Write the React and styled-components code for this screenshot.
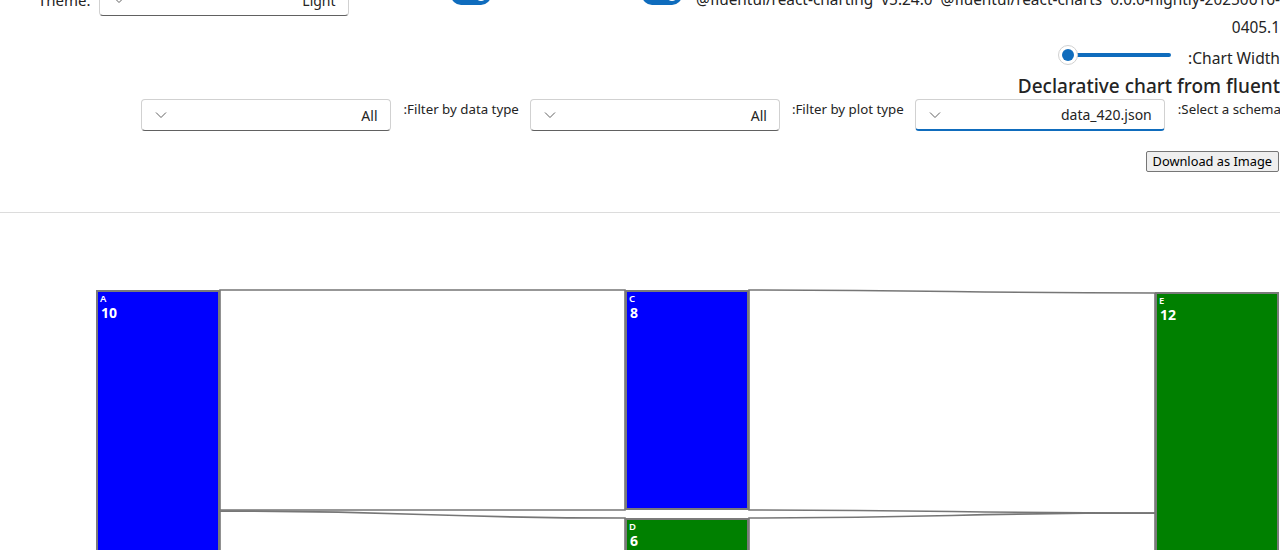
import styled, { createGlobalStyle } from 'styled-components'

const GlobalStyle = createGlobalStyle`
  html, body {
    margin: 0;
    padding: 0;
    background: #ffffff;
  }
  body {
    font-family: 'Segoe UI', 'Noto Sans', 'Open Sans', sans-serif;
    color: #242424;
    overflow: hidden;
  }
`

const Page = styled.div`
  width: 1280px;
  height: 550px;
  overflow: hidden;
`

const Content = styled.div`
  margin-top: -16px;
`

const TopRow = styled.div`
  display: flex;
  align-items: flex-start;
  height: 58px;
`

const ThemeLabel = styled.span`
  margin-left: 38px;
  font-size: 15px;
  line-height: 32px;
`

const Toggle = styled.div`
  width: 40px;
  height: 20px;
  border-radius: 10px;
  background-color: #0f6cbd;
  margin-left: ${(props) => props.offset}px;
  margin-top: 1px;
  display: flex;
  align-items: center;
  justify-content: flex-end;
  padding-right: 4px;
  box-sizing: border-box;
  span {
    width: 12px;
    height: 12px;
    border-radius: 50%;
    background: #ffffff;
  }
`

const Version = styled.div`
  flex: 1;
  margin-left: 14px;
  margin-top: 2px;
  font-size: 15.4px;
  line-height: 28px;
  text-align: right;
  white-space: nowrap;
`

const SliderRow = styled.div`
  display: flex;
  justify-content: flex-end;
  align-items: center;
  height: 26px;
`

const Slider = styled.div`
  position: relative;
  width: 115px;
  height: 20px;
  display: flex;
  align-items: center;
  &::before {
    content: '';
    display: block;
    margin-left: 10px;
    width: 103px;
    height: 4px;
    border-radius: 2px;
    background: #0f6cbd;
  }
`

const Thumb = styled.span`
  position: absolute;
  left: 0;
  top: 0;
  width: 20px;
  height: 20px;
  border-radius: 50%;
  background: #ffffff;
  border: 1px solid #d1d1d1;
  box-sizing: border-box;
  display: flex;
  align-items: center;
  justify-content: center;
  &::after {
    content: '';
    width: 12px;
    height: 12px;
    border-radius: 50%;
    background: #0f6cbd;
  }
`

const RowLabel = styled.span`
  font-size: 15.6px;
  line-height: 20px;
  padding-top: 6px;
  margin-left: 15px;
  white-space: nowrap;
`

const Title = styled.h2`
  margin: 4px 0 0;
  font-size: 19px;
  font-weight: 500;
  line-height: 28px;
  text-align: right;
  white-space: nowrap;
`

const FilterRow = styled.div`
  display: flex;
  justify-content: flex-end;
  align-items: flex-start;
  margin-top: -1px;
  margin-right: -12px;
`

const FilterLabel = styled.span`
  font-size: 13.3px;
  line-height: 20px;
  margin-left: ${(props) => props.gap || 12}px;
  margin-right: 11px;
  white-space: nowrap;
`

const DropBox = styled.div`
  flex: none;
  width: 250px;
  height: 32px;
  box-sizing: border-box;
  border: 1px solid #d1d1d1;
  border-bottom: ${(props) => (props.focused ? '2px solid #0f6cbd' : '1px solid #616161')};
  border-radius: 4px;
  background: #ffffff;
  display: flex;
  align-items: center;
  justify-content: space-between;
  padding: 0 12px 0 13px;
  font-size: 14px;
  color: #242424;
  margin-left: ${(props) => props.offset || 0}px;
  svg {
    display: block;
  }
`

const DownloadRow = styled.div`
  display: flex;
  justify-content: flex-end;
  margin-top: 20px;
  padding-right: 1px;
`

const DownloadButton = styled.button`
  height: 21px;
  padding: 0 6px;
  font-family: inherit;
  font-size: 12.8px;
  line-height: 17px;
  color: #000000;
  background: #efefef;
  border: 1px solid #767676;
  border-radius: 2px;
`

const Divider = styled.div`
  margin-top: 40px;
  height: 1px;
  background: #dcdcdc;
`

const Chart = styled.svg`
  display: block;
  font-family: 'Segoe UI', 'Noto Sans', 'Open Sans', sans-serif;
`

const Chevron = () => (
  <svg width="12" height="8" viewBox="0 0 12 8">
    <polyline points="1,1.5 6,6.5 11,1.5" fill="none" stroke="#616161" strokeWidth="1" />
  </svg>
)

function Dropdown({ value, focused, offset }) {
  return (
    <DropBox focused={focused} offset={offset}>
      <Chevron />
      <span>{value}</span>
    </DropBox>
  )
}

const nodes = [
  { id: 'A', value: 10, x: 97, y: 77, h: 400, color: '#0000ff' },
  { id: 'C', value: 8, x: 626, y: 77, h: 218, color: '#0000ff' },
  { id: 'D', value: 6, x: 626, y: 305, h: 100, color: '#008000' },
  { id: 'E', value: 12, x: 1156, y: 79, h: 400, color: '#008000' },
]

const links = [
  { x0: 220, x1: 625, t0: 76, t1: 76, b0: 296, b1: 296 },
  { x0: 220, x1: 625, t0: 297, t1: 304, b0: 420, b1: 420 },
  { x0: 749, x1: 1155, t0: 76, t1: 79, b0: 296, b1: 299 },
  { x0: 749, x1: 1155, t0: 304, t1: 299, b0: 420, b1: 420 },
]

const linkPath = ({ x0, x1, t0, t1, b0, b1 }) => {
  const xm = (x0 + x1) / 2
  return `M${x0},${t0} C${xm},${t0} ${xm},${t1} ${x1},${t1} L${x1},${b1} C${xm},${b1} ${xm},${b0} ${x0},${b0} Z`
}

function Sankey() {
  return (
    <Chart width="1280" height="338" viewBox="0 -1 1280 338">
      {links.map((l, i) => (
        <path key={i} d={linkPath(l)} fill="#ffffff" stroke="#767676" strokeWidth="1.6" />
      ))}
      {nodes.map((n) => (
        <g key={n.id}>
          <rect x={n.x} y={n.y} width="122" height={n.h} fill={n.color} stroke="#7a7a7a" strokeWidth="2" />
          <text x={n.x + 3} y={n.y + 11} fill="#ffffff" fontSize="9.5" fontWeight="600">
            {n.id}
          </text>
          <text x={n.x + 4} y={n.y + 27} fill="#ffffff" fontSize="14" fontWeight="700">
            {n.value}
          </text>
        </g>
      ))}
    </Chart>
  )
}

export default function App() {
  return (
    <Page>
      <GlobalStyle />
      <Content>
        <TopRow>
          <ThemeLabel>Theme:</ThemeLabel>
          <Dropdown value="Light" offset={8} />
          <Toggle offset={102}>
            <span />
          </Toggle>
          <Toggle offset={151}>
            <span />
          </Toggle>
          <Version>
            @fluentui/react-charting&nbsp; v5.24.0&nbsp; @fluentui/react-charts&nbsp; 0.0.0-nightly-20250616-
            <br />
            0405.1
          </Version>
        </TopRow>
        <SliderRow>
          <Slider>
            <Thumb />
          </Slider>
          <RowLabel>:Chart Width</RowLabel>
        </SliderRow>
        <Title>Declarative chart from fluent</Title>
        <FilterRow>
          <Dropdown value="All" />
          <FilterLabel gap={13}>:Filter by data type</FilterLabel>
          <Dropdown value="All" />
          <FilterLabel>:Filter by plot type</FilterLabel>
          <Dropdown value="data_420.json" focused />
          <FilterLabel gap={13}>:Select a schema</FilterLabel>
        </FilterRow>
        <DownloadRow>
          <DownloadButton>Download as Image</DownloadButton>
        </DownloadRow>
        <Divider />
        <Sankey />
      </Content>
    </Page>
  )
}
